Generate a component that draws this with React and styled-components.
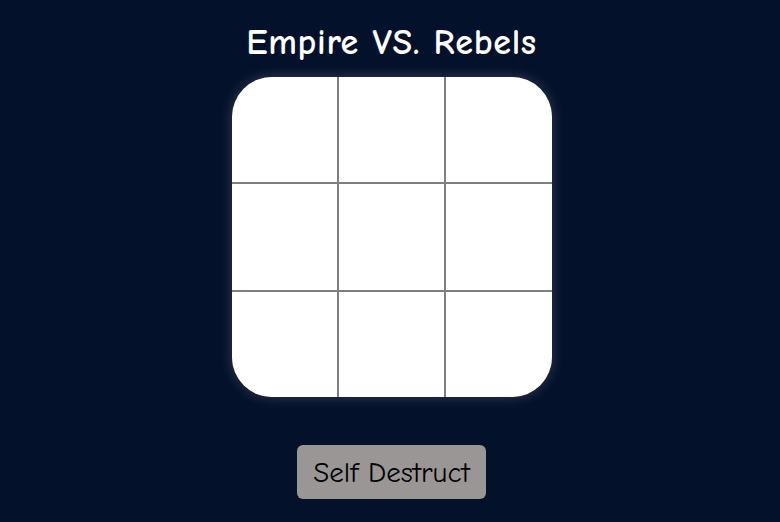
import React, { useState } from 'react';
import styled, { createGlobalStyle } from 'styled-components';

const GlobalStyle = createGlobalStyle`
  html, body {
    margin: 0;
    padding: 0;
    background: #04112a;
  }
  body {
    font-family: "Comic Sans MS", "Comic Neue", "DejaVu Sans", sans-serif;
  }
`;

const Page = styled.main`
  min-height: 522px;
  display: flex;
  flex-direction: column;
  align-items: center;
  padding: 18px 0 0 3px;
  box-sizing: border-box;
`;

const Title = styled.h1`
  margin: 0 0 9px;
  color: #ffffff;
  font-size: 36px;
  font-weight: 900;
  line-height: 50px;
  letter-spacing: 0.7px;
`;

const Board = styled.div`
  width: 320px;
  height: 320px;
  display: grid;
  grid-template-columns: repeat(3, 1fr);
  grid-template-rows: repeat(3, 1fr);
  gap: 2px;
  background: #7f7f7f;
  border-radius: 40px;
  overflow: hidden;
  box-shadow: 0 0 14px rgba(255, 255, 255, 0.18);
`;

const Cell = styled.button`
  border: none;
  padding: 0;
  margin: 0;
  background: #ffffff;
  cursor: pointer;
  font-family: inherit;
  font-size: 56px;
  color: #04112a;
`;

const DestructButton = styled.button`
  margin-top: 48px;
  width: 189px;
  height: 54px;
  border: none;
  border-radius: 6px;
  background: #9a9696;
  color: #000000;
  font-family: inherit;
  font-size: 29px;
  cursor: pointer;
`;

export default function App() {
  const [cells, setCells] = useState(Array(9).fill(null));
  const [turn, setTurn] = useState('E');

  const play = (i) => {
    if (cells[i]) return;
    const next = cells.slice();
    next[i] = turn;
    setCells(next);
    setTurn(turn === 'E' ? 'R' : 'E');
  };

  return (
    <>
      <GlobalStyle />
      <Page>
        <Title>Empire VS. Rebels</Title>
        <Board>
          {cells.map((c, i) => (
            <Cell key={i} onClick={() => play(i)}>
              {c}
            </Cell>
          ))}
        </Board>
        <DestructButton onClick={() => setCells(Array(9).fill(null))}>
          Self Destruct
        </DestructButton>
      </Page>
    </>
  );
}
